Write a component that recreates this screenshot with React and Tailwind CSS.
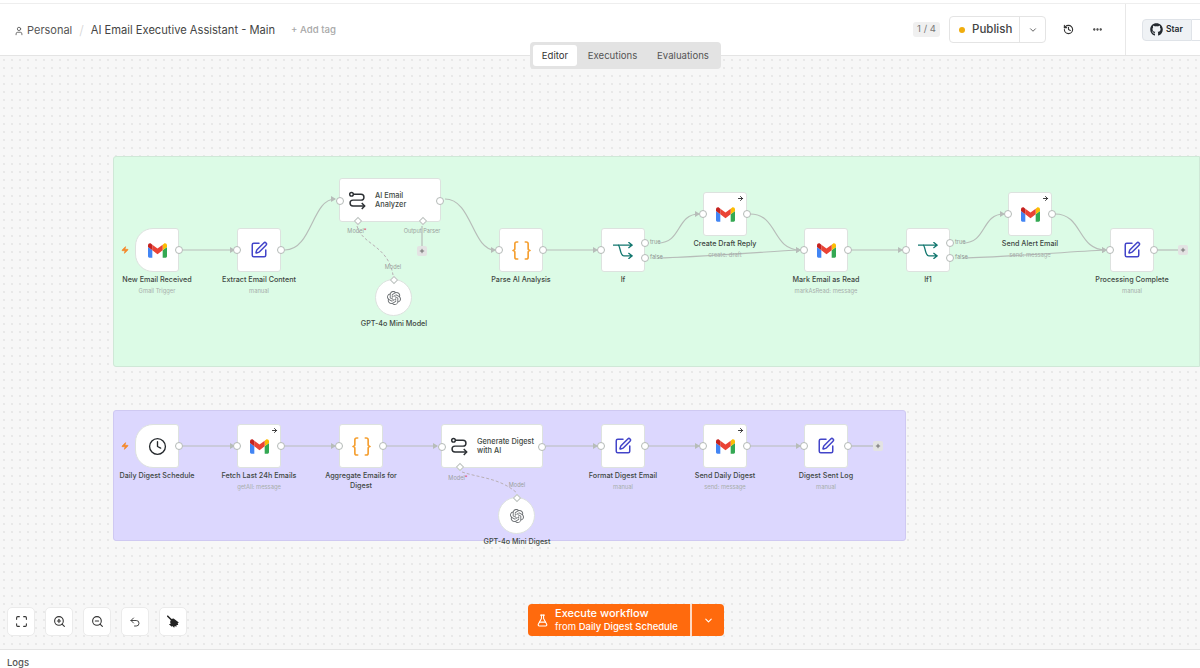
import React from 'react';
import {
  ArrowRight,
  ChevronDown,
  Clock,
  Ellipsis,
  FlaskConical,
  History,
  Maximize,
  Plus,
  SquarePen,
  Undo2,
  User,
  Zap,
  ZoomIn,
  ZoomOut,
} from 'lucide-react';
import { FaGithub } from 'react-icons/fa';
import { SiOpenai } from 'react-icons/si';

function GmailIcon() {
  return (
    <svg viewBox="0 0 24 24" className="h-[19px] w-[19px]">
      <path fill="#4285F4" d="M1.636 21h3.819v-9.27L0 7.64v11.73C0 20.27.73 21 1.636 21z" />
      <path fill="#34A853" d="M18.545 21h3.819c.904 0 1.636-.732 1.636-1.636V7.64l-5.455 4.09z" />
      <path fill="#FBBC04" d="M18.545 4.64v7.09L24 7.64V5.457c0-2.023-2.31-3.178-3.927-1.964z" />
      <path fill="#EA4335" d="M5.455 11.730V4.640L12 9.550l6.545-4.910v7.090L12 16.640z" />
      <path fill="#C5221F" d="M0 5.457V7.640l5.455 4.090V4.640L3.927 3.493C2.309 2.280 0 3.434 0 5.457z" />
    </svg>
  );
}

function RouteIcon() {
  return (
    <svg viewBox="0 0 24 26" fill="none" stroke="#2b2f33" strokeWidth="2" className="h-[19px] w-[18px] shrink-0">
      <circle cx="4.500" cy="4.500" r="2.500" />
      <path d="M7 4.500h10.500a4 4 0 0 1 0 8h-11a4 4 0 0 0 0 8H22" />
      <path d="M18.500 16.500l4 4-4 4" />
    </svg>
  );
}

function IfIcon() {
  return (
    <svg viewBox="0 0 24 20" fill="none" stroke="#12776f" strokeWidth="1.600" className="h-[17px] w-[20px]">
      <path d="M0 3.500h23M18.500 0L23 3.500 18.500 7" />
      <path d="M6 3.500c3 0 2 13 7 13h10M18.500 13L23 16.500 18.500 20" />
    </svg>
  );
}

function BracesIcon() {
  return (
    <svg viewBox="2 2 20 20" fill="none" stroke="#f59e2e" strokeWidth="1.700" strokeLinecap="round" strokeLinejoin="round" className="h-[19px] w-[19px]">
      <path d="M8 3H7a2 2 0 0 0-2 2v5a2 2 0 0 1-2 2 2 2 0 0 1 2 2v5a2 2 0 0 0 2 2h1" />
      <path d="M16 3h1a2 2 0 0 1 2 2v5a2 2 0 0 0 2 2 2 2 0 0 0-2 2v5a2 2 0 0 1-2 2h-1" />
    </svg>
  );
}

function BroomIcon() {
  return (
    <svg viewBox="0 0 24 24" className="h-[14px] w-[14px]" fill="#222">
      <path d="M3 2l7 7" stroke="#222" strokeWidth="2.600" strokeLinecap="round" />
      <path d="M9 7l4-1 9 7-2 1 1 3-3 0 0 3-3-1-1 3-3-3-1 1-5-4 3-1-1-3z" />
    </svg>
  );
}

const edit = <SquarePen className="h-[18px] w-[18px] text-[#4345c9]" strokeWidth={2} />;

const nodes = [
  { pos: 'left-[135px] top-[172px]', icon: <GmailIcon />, label: 'New Email Received', sub: 'Gmail Trigger', trigger: true },
  { pos: 'left-[237px] top-[172px]', icon: edit, label: 'Extract Email Content', sub: 'manual' },
  { pos: 'left-[499px] top-[172px]', icon: <BracesIcon />, label: 'Parse AI Analysis' },
  { pos: 'left-[601px] top-[172px]', icon: <IfIcon />, label: 'If', branch: true },
  { pos: 'left-[703px] top-[136px]', icon: <GmailIcon />, label: 'Create Draft Reply', sub: 'create: draft', send: true },
  { pos: 'left-[804px] top-[172px]', icon: <GmailIcon />, label: 'Mark Email as Read', sub: 'markAsRead: message' },
  { pos: 'left-[906px] top-[172px]', icon: <IfIcon />, label: 'If1', branch: true },
  { pos: 'left-[1008px] top-[136px]', icon: <GmailIcon />, label: 'Send Alert Email', sub: 'send: message', send: true },
  { pos: 'left-[1110px] top-[172px]', icon: edit, label: 'Processing Complete', sub: 'manual' },
  { pos: 'left-[135px] top-[368px]', icon: <Clock className="h-[19px] w-[19px] text-[#24282c]" strokeWidth={1.7} />, label: 'Daily Digest Schedule', trigger: true },
  { pos: 'left-[237px] top-[368px]', icon: <GmailIcon />, label: 'Fetch Last 24h Emails', sub: 'getAll: message', send: true },
  { pos: 'left-[339px] top-[368px]', icon: <BracesIcon />, label: 'Aggregate Emails for\nDigest' },
  { pos: 'left-[601px] top-[368px]', icon: edit, label: 'Format Digest Email', sub: 'manual' },
  { pos: 'left-[703px] top-[368px]', icon: <GmailIcon />, label: 'Send Daily Digest', sub: 'send: message', send: true },
  { pos: 'left-[804px] top-[368px]', icon: edit, label: 'Digest Sent Log', sub: 'manual' },
];

const edges = [
  'M183 250H234',
  'M285 250C312 250 312 199 335 199',
  'M445 199C472 199 472 250 495 250',
  'M546 250H597',
  'M658 243C682 243 676 214 699 214',
  'M658 258C700 257 760 252 800 250',
  'M750 214C778 214 772 250 800 250',
  'M851 250H902',
  'M963 243C987 243 981 214 1004 214',
  'M963 258C1005 257 1065 252 1106 250',
  'M1055 214C1083 214 1077 250 1106 250',
  'M183 446H234',
  'M285 446H335',
  'M387 446H437',
  'M546 446H597',
  'M648 446H699',
  'M750 446H800',
];

const plainEdges = ['M1157 250H1178', 'M851 446H873', 'M422 226V246'];
const dashedEdges = ['M357 226C362 245 388 245 393 275', 'M462 472C480 478 500 478 517 493'];

function Handle({ className }) {
  return <span className={`absolute h-[8px] w-[8px] rounded-full border border-[#b4bab7] bg-white ${className}`} />;
}

function Diamond({ className }) {
  return <span className={`absolute h-[6px] w-[6px] rotate-45 border border-[#bcc2bf] bg-white ${className}`} />;
}

function Caption({ label, sub, className }) {
  return (
    <div className={`absolute flex w-[130px] flex-col items-center text-center ${className}`}>
      <span className="whitespace-pre-line text-[7.200px] leading-[10px] font-medium text-[#3e4743]">{label}</span>
      {sub && <span className="mt-[1px] text-[5.800px] leading-[10px] text-[#a7aeab]">{sub}</span>}
    </div>
  );
}

function Node({ pos, icon, label, sub, trigger, send, branch }) {
  return (
    <div className={`absolute h-[44px] w-[44px] ${pos}`}>
      <div className={`flex h-full w-full items-center justify-center border border-[#dde2df] bg-white ${trigger ? 'rounded-l-[18px] rounded-r-[3px]' : 'rounded-[3px]'}`}>
        {icon}
      </div>
      {send && <ArrowRight className="absolute right-[3px] top-[3px] h-[7px] w-[7px] text-[#222]" strokeWidth={3} />}
      {trigger && <Zap className="absolute left-[-14px] top-[18px] h-[8px] w-[8px] fill-[#f58a2e] text-[#f58a2e]" />}
      {!trigger && <Handle className="left-[-4px] top-[18px]" />}
      {branch ? (
        <>
          <Handle className="right-[-4px] top-[11px]" />
          <Handle className="right-[-4px] top-[26px]" />
          <span className="absolute left-[49px] top-[10px] text-[5.600px] leading-[9px] text-[#8f9693]">true</span>
          <span className="absolute left-[49px] top-[25px] text-[5.600px] leading-[9px] text-[#8f9693]">false</span>
        </>
      ) : (
        <Handle className="right-[-4px] top-[18px]" />
      )}
      <Caption label={label} sub={sub} className="left-[-43px] top-[47px]" />
    </div>
  );
}

function AgentNode({ pos, label, children }) {
  return (
    <div className={`absolute flex h-[44px] w-[102px] items-center gap-[9px] rounded-[3px] border border-[#dde2df] bg-white pl-[8px] ${pos}`}>
      <RouteIcon />
      <span className="whitespace-pre text-[7.400px] leading-[9px] font-medium text-[#3e4743]">{label}</span>
      <Handle className="left-[-4px] top-[18px]" />
      <Handle className="right-[-4px] top-[18px]" />
      {children}
    </div>
  );
}

function ModelNode({ pos, label }) {
  return (
    <div className={`absolute flex h-[37px] w-[37px] items-center justify-center rounded-full border border-[#dde2df] bg-white ${pos}`}>
      <SiOpenai className="h-[14px] w-[14px] text-[#6b6f72]" />
      <Diamond className="left-[14.500px] top-[-3px]" />
      <Caption label={label} className="left-[-47px] top-[39px]" />
    </div>
  );
}

function TinyLabel({ className, children }) {
  return <span className={`absolute -translate-x-1/2 text-[5.600px] leading-[9px] whitespace-nowrap text-[#9a9f9d] ${className}`}>{children}</span>;
}

function PlusDot({ className }) {
  return (
    <span className={`absolute flex h-[10px] w-[10px] items-center justify-center rounded-[2px] bg-[#e3e3e3] ${className}`}>
      <Plus className="h-[6px] w-[6px] text-[#555]" strokeWidth={3} />
    </span>
  );
}

function ToolButton({ children, className }) {
  return (
    <button className={`flex h-[29px] items-center justify-center rounded-[5px] border border-[#ebebeb] bg-white text-[#333] ${className}`}>
      {children}
    </button>
  );
}

export default function App() {
  return (
    <div className="relative flex h-[668px] w-[1200px] flex-col overflow-hidden bg-white font-['Inter',sans-serif]">
      <div className="h-[4px] shrink-0 border-b border-[#eeeeee]" />

      {/* header */}
      <header className="flex h-[52px] shrink-0 items-center border-b border-[#e4e4e4] bg-white pl-[14px]">
        <div className="flex items-center pt-[2px]">
          <User className="h-[10px] w-[10px] text-[#555]" />
          <span className="ml-[3px] text-[11px] text-[#555]">Personal</span>
          <span className="mx-[7px] text-[13px] font-light text-[#d5d5d5]">/</span>
          <span className="text-[11.150px] text-[#444]">AI Email Executive Assistant - Main</span>
          <span className="ml-[16px] text-[9.600px] font-medium text-[#a8a8a8]">+ Add tag</span>
        </div>

        <div className="ml-auto flex h-full items-center">
          <span className="flex h-[15px] w-[27px] items-center justify-center rounded-[3px] bg-[#f0f0f0] text-[9.500px] text-[#777]">1 / 4</span>
          <div className="ml-[9px] flex h-[27px] w-[97px] items-center rounded-[4px] border border-[#e4e4e4] bg-white">
            <div className="flex h-full flex-1 items-center border-r border-[#e4e4e4] pl-[9px]">
              <span className="h-[6px] w-[6px] rounded-full bg-[#f0ad0e]" />
              <span className="ml-[7px] text-[11.500px] font-medium text-[#444]">Publish</span>
            </div>
            <div className="flex h-full w-[25px] items-center justify-center">
              <ChevronDown className="h-[10px] w-[10px] text-[#444]" />
            </div>
          </div>
          <History className="ml-[17px] h-[11px] w-[11px] text-[#333]" strokeWidth={2.4} />
          <Ellipsis className="ml-[18px] h-[11px] w-[11px] text-[#333]" strokeWidth={3} />
          <div className="ml-[22px] flex h-full items-center border-l border-[#e8e8e8] pl-[16px]">
            <div className="flex h-[22px] w-[50px] items-center gap-[3px] rounded-l-[4px] border border-[#dfe3e8] bg-[#eff2f5] pl-[7px]">
              <FaGithub className="h-[13px] w-[13px] text-[#24292f]" />
              <span className="text-[8.500px] font-semibold text-[#24292f]">Star</span>
            </div>
            <div className="h-[22px] w-[8px] border-y border-[#dfe3e8] bg-white" />
          </div>
        </div>
      </header>

      {/* canvas */}
      <main className="relative flex-1 bg-[#f7f7f7] bg-[radial-gradient(#e8e8e8_0.7px,transparent_0.8px)] bg-[size:8px_8px]">
        <div className="absolute left-[113px] top-[100px] h-[211px] w-[1087px] rounded-l-[3px] border border-[#cfe8d7] bg-[#dcfbe6]" />
        <div className="absolute left-[113px] top-[354px] h-[131px] w-[793px] rounded-[3px] border border-[#cfc9f2] bg-[#dcd7fe]" />

        <svg className="absolute left-0 top-0 h-[593px] w-[1200px]" viewBox="0 56 1200 593" fill="none">
          <defs>
            <marker id="arrow" markerWidth="5" markerHeight="6" refX="4" refY="3" orient="auto" markerUnits="userSpaceOnUse">
              <path d="M0 0L5 3L0 6z" fill="#b7bdb9" />
            </marker>
          </defs>
          {edges.map((d) => (
            <path key={d} d={d} stroke="#b7bdb9" strokeWidth="1.200" markerEnd="url(#arrow)" />
          ))}
          {plainEdges.map((d) => (
            <path key={d} d={d} stroke="#b7bdb9" strokeWidth="1.200" />
          ))}
          {dashedEdges.map((d) => (
            <path key={d} d={d} stroke="#b9b0b5" strokeWidth="1" strokeDasharray="3 2" />
          ))}
        </svg>

        {nodes.map((node) => (
          <Node key={node.label} {...node} />
        ))}

        <AgentNode pos="left-[339px] top-[122px]" label={'AI Email\nAnalyzer'}>
          <Diamond className="left-[14.500px] top-[39px]" />
          <Diamond className="left-[79.500px] top-[39px]" />
        </AgentNode>
        <TinyLabel className="left-[357px] top-[171px]">Model<span className="text-[#e0405a]">*</span></TinyLabel>
        <TinyLabel className="left-[422px] top-[171px]">Output Parser</TinyLabel>
        <PlusDot className="left-[417px] top-[190px]" />
        <TinyLabel className="left-[393px] top-[207px]">Model</TinyLabel>
        <ModelNode pos="left-[375px] top-[223px]" label="GPT-4o Mini Model" />

        <AgentNode pos="left-[441px] top-[368px]" label={'Generate Digest\nwith AI'}>
          <Diamond className="left-[14.500px] top-[39px]" />
        </AgentNode>
        <TinyLabel className="left-[458px] top-[418px]">Model<span className="text-[#e0405a]">*</span></TinyLabel>
        <TinyLabel className="left-[517px] top-[425px]">Model</TinyLabel>
        <ModelNode pos="left-[498px] top-[441px]" label="GPT-4o Mini Digest" />

        <PlusDot className="left-[1178px] top-[189px]" />
        <PlusDot className="left-[873px] top-[385px]" />

        {/* tabs */}
        <div className="absolute left-[530px] top-[-14px] flex h-[27px] w-[191px] items-center gap-[1px] rounded-[4px] bg-[#e3e3e3] px-[3px] text-[9.600px] text-[#555]">
          <span className="flex h-[21px] w-[44px] items-center justify-center rounded-[3px] bg-white pt-[1px] text-[#333]">Editor</span>
          <span className="flex h-[21px] w-[69px] items-center justify-center pt-[1px]">Executions</span>
          <span className="flex h-[21px] w-[70px] items-center justify-center pt-[1px]">Evaluations</span>
        </div>

        {/* zoom tools */}
        <div className="absolute bottom-[13px] left-[7px] flex gap-[10px]">
          <ToolButton className="w-[28px]"><Maximize className="h-[13px] w-[13px]" strokeWidth={2} /></ToolButton>
          <ToolButton className="w-[28px]"><ZoomIn className="h-[13px] w-[13px]" strokeWidth={2} /></ToolButton>
          <ToolButton className="w-[28px]"><ZoomOut className="h-[13px] w-[13px]" strokeWidth={2} /></ToolButton>
          <ToolButton className="w-[28px]"><Undo2 className="h-[12px] w-[12px]" strokeWidth={1.800} /></ToolButton>
          <ToolButton className="w-[28px]"><BroomIcon /></ToolButton>
        </div>

        {/* execute */}
        <div className="absolute bottom-[13px] left-[528px] flex h-[32px] w-[196px] overflow-hidden rounded-[4px] bg-[#ff6a0d] text-white">
          <div className="flex h-full w-[164px] items-center gap-[6px] border-r-2 border-[#ffd9c2] pl-[8px]">
            <FlaskConical className="h-[13px] w-[13px]" strokeWidth={2} />
            <div className="flex flex-col pb-[2px]">
              <span className="text-[11px] leading-[14px] font-medium whitespace-nowrap">Execute workflow</span>
              <span className="text-[9.500px] leading-[13px] whitespace-nowrap">from <span className="font-medium">Daily Digest Schedule</span></span>
            </div>
          </div>
          <div className="flex flex-1 items-center justify-center">
            <ChevronDown className="h-[11px] w-[11px]" strokeWidth={2.400} />
          </div>
        </div>
      </main>

      {/* logs */}
      <footer className="flex h-[19px] shrink-0 items-end border-t border-[#e4e4e4] bg-white pl-[7px] text-[9.500px] leading-[10px] font-medium text-[#555]">
        Logs
      </footer>
    </div>
  );
}
